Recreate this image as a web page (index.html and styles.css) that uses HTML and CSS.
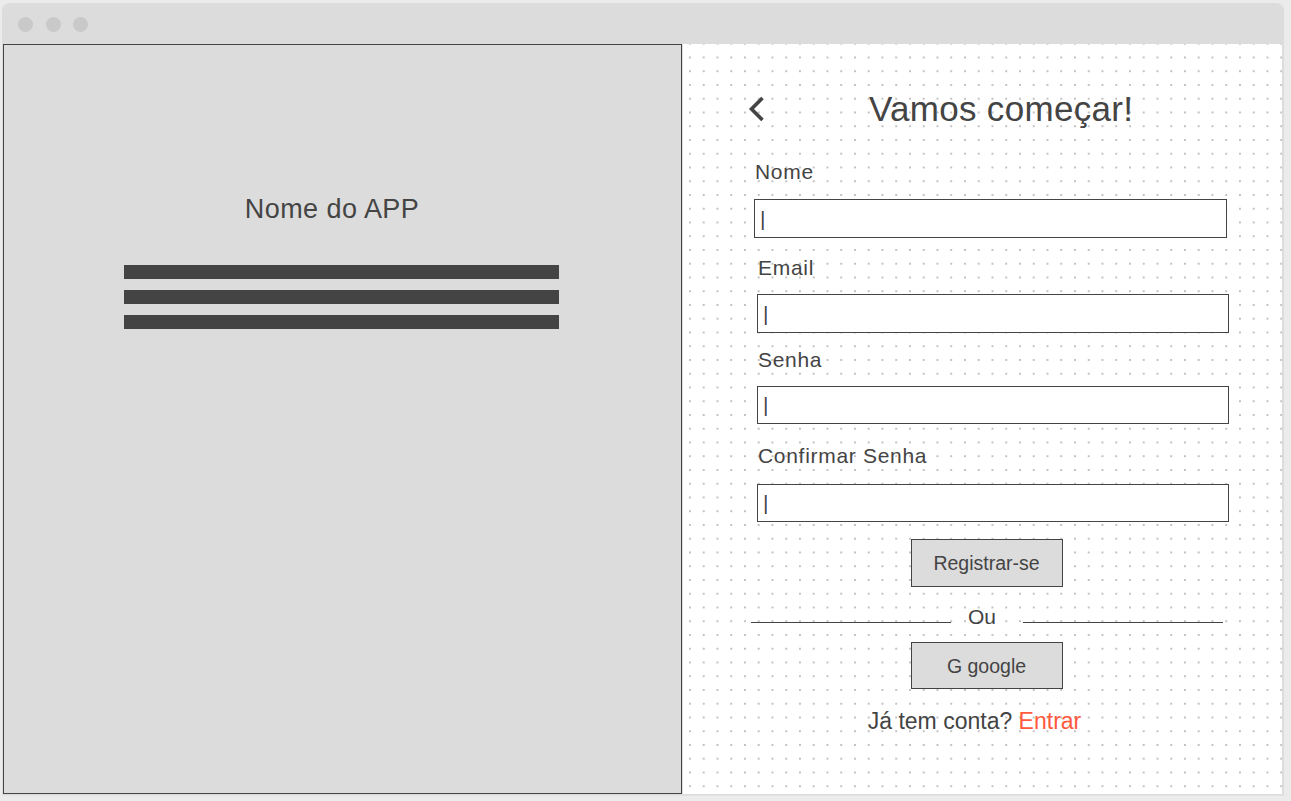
FILE: index.html
```html
<!DOCTYPE html>
<html lang="pt">
<head>
<meta charset="utf-8">
<title>Vamos começar!</title>
<link rel="stylesheet" href="styles.css">
</head>
<body>
<div class="window">
  <div class="titlebar">
    <span class="light"></span><span class="light"></span><span class="light"></span>
  </div>
  <div class="content">
    <section class="left-panel">
      <h2 class="app-name">Nome do APP</h2>
      <div class="bars">
        <div class="bar"></div>
        <div class="bar"></div>
        <div class="bar"></div>
      </div>
    </section>
    <section class="right-panel">
      <header class="head">
        <svg class="back" width="24" height="40" viewBox="0 0 24 40"><polyline points="17.5,9 6.5,20 17.5,31" fill="none" stroke="#444" stroke-width="3.6"/></svg>
        <h1 class="title">Vamos começar!</h1>
      </header>
      <div class="form">
        <div class="field field-nome">
          <label class="label">Nome</label>
          <div class="input input-tall">|</div>
        </div>
        <div class="field field-email">
          <label class="label">Email</label>
          <div class="input input-tall input-narrow">|</div>
        </div>
        <div class="field field-senha">
          <label class="label">Senha</label>
          <div class="input input-narrow">|</div>
        </div>
        <div class="field field-confirm">
          <label class="label">Confirmar Senha</label>
          <div class="input input-narrow">|</div>
        </div>
      </div>
      <div class="actions">
        <button class="btn btn-register">Registrar-se</button>
        <div class="divider">
          <span class="line"></span><span class="or">Ou</span><span class="line line-right"></span>
        </div>
        <button class="btn btn-google">G google</button>
        <p class="login">Já tem conta? <a class="login-link">Entrar</a></p>
      </div>
    </section>
  </div>
</div>
</body>
</html>
```

FILE: styles.css
```css
* { box-sizing: border-box; }
html, body { margin: 0; padding: 0; }
body {
  background: #ebebeb;
  font-family: "Liberation Sans", Arial, sans-serif;
  color: #444;
  width: 1291px;
  height: 801px;
  overflow: hidden;
}
.window {
  margin: 3px 0 0 2px;
  width: 1282px;
  background: #dcdcdc;
  border-radius: 8px 8px 0 0;
  box-shadow: 0 1px 0 #e2e2e2;
}
.titlebar {
  height: 41px;
  display: flex;
  align-items: center;
  gap: 12.5px;
  padding-left: 16px;
  padding-top: 1px;
}
.light {
  width: 15px;
  height: 15px;
  border-radius: 50%;
  background: #c9c9c9;
}
.content {
  display: flex;
  height: 751px;
}
.left-panel {
  width: 679px;
  height: 750px;
  margin-left: 1px;
  border: 1px solid #444;
  background: #dcdcdc;
  display: flex;
  flex-direction: column;
  align-items: center;
  padding-top: 148px;
}
.app-name {
  margin: 0;
  font-weight: normal;
  font-size: 27px;
  line-height: 32px;
  letter-spacing: 0.45px;
  padding-right: 21px;
  color: #444;
}
.bars {
  margin-top: 40px;
  margin-right: 2px;
  display: flex;
  flex-direction: column;
  gap: 11px;
}
.bar {
  width: 435px;
  height: 14px;
  background: #444;
}
.right-panel {
  width: 599px;
  height: 750px;
  margin-left: 1px;
  background-color: #fff;
  background-image: radial-gradient(circle at center, #c2c2c2 0 1px, rgba(194,194,194,0) 1.4px);
  background-size: 13.75px 13.75px;
  background-position: 0.1px 6.6px;
  padding-top: 45px;
}
.head {
  display: flex;
  align-items: center;
  height: 40px;
  padding-left: 62px;
}
.back { display: block; flex: none; }
.title {
  margin: 0 0 0 100px;
  font-weight: normal;
  font-size: 35px;
  line-height: 40px;
  letter-spacing: 0.3px;
  color: #444;
  white-space: nowrap;
}
.form {
  padding-left: 71px;
  margin-top: 31px;
}
.field { display: flex; flex-direction: column; }
.label {
  font-size: 21px;
  line-height: 24px;
  letter-spacing: 0.7px;
  margin-bottom: 15px;
  padding-left: 1px;
}
.field-email { margin-top: 18px; margin-left: 3px; }
.field-email .label { margin-bottom: 14px; }
.field-senha { margin-top: 15px; margin-left: 3px; }
.field-senha .label { margin-bottom: 14px; }
.field-confirm { margin-top: 20px; margin-left: 3px; }
.field-confirm .label { margin-bottom: 16px; }
.input {
  width: 473px;
  height: 38px;
  border: 1px solid #444;
  background: #fff;
  display: flex;
  align-items: center;
  padding-left: 5px;
  font-size: 21px;
  line-height: 24px;
  color: #444;
}
.input-tall { height: 39px; }
.input-narrow { width: 472px; }
.actions {
  margin-left: 68px;
  width: 471px;
  display: flex;
  flex-direction: column;
  align-items: center;
  margin-top: 17px;
}
.btn {
  width: 152px;
  height: 48px;
  border: 1px solid #444;
  border-radius: 0;
  background: #dcdcdc;
  font-family: "Liberation Sans", Arial, sans-serif;
  font-size: 19.5px;
  line-height: 22px;
  color: #444;
  padding: 0;
  display: flex;
  align-items: center;
  justify-content: center;
}
.btn-google { height: 47px; margin-top: 13px; }
.divider {
  display: flex;
  align-items: flex-start;
  width: 471px;
  height: 24px;
  margin-top: 18px;
}
.line {
  flex: none;
  width: 200px;
  height: 1px;
  background: #444;
  margin-top: 17px;
}
.line-right { width: 200px; }
.or {
  font-size: 21px;
  line-height: 24px;
  margin: 0 26.5px 0 17px;
}
.login {
  margin: 19px 0 0;
  font-size: 23px;
  line-height: 26px;
  padding-right: 24px;
  white-space: nowrap;
}
.login-link { color: #ff5a3d; }
```
